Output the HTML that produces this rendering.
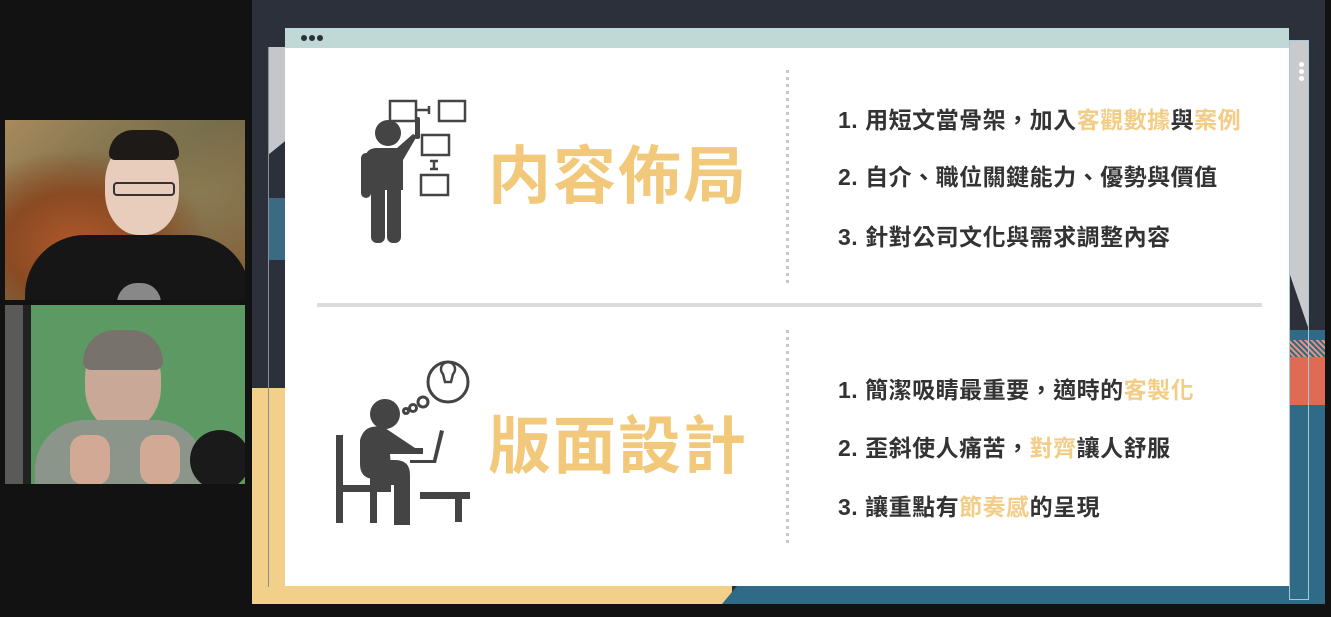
<!DOCTYPE html>
<html><head><meta charset="utf-8"><style>
*{margin:0;padding:0;box-sizing:border-box}
body{width:1331px;height:617px;background:#121212;position:relative;overflow:hidden;font-family:"Liberation Sans","Noto Sans CJK TC",sans-serif}
.a{position:absolute}
.item{position:absolute;left:838px;font-size:23px;font-weight:bold;color:#333;white-space:nowrap;letter-spacing:0.5px}
.y{color:#f3cd86}
.title{position:absolute;left:488px;font-size:63px;font-weight:bold;color:#f2c97a;letter-spacing:2px;white-space:nowrap}
.dots{position:absolute;left:786px;width:3px;background:repeating-linear-gradient(#c8c8c8 0 3px,transparent 3px 7px)}
</style></head><body>
<!-- webcams -->
<div class="a" style="left:5px;top:120px;width:240px;height:180px;background:radial-gradient(ellipse at 30% 70%,#b0582a 0,#8a4a22 30%,transparent 55%),radial-gradient(ellipse at 80% 40%,#8a7a52,transparent 60%),linear-gradient(135deg,#a88a5c,#6f6a4a 50%,#8b5a34);overflow:hidden">
 <div class="a" style="left:100px;top:20px;width:74px;height:95px;border-radius:45%;background:#e8cdbd"></div>
 <div class="a" style="left:104px;top:10px;width:70px;height:30px;border-radius:40px 40px 10px 10px;background:#1d1a18"></div>
 <div class="a" style="left:108px;top:62px;width:62px;height:14px;border:2px solid #333;border-radius:4px"></div>
 <div class="a" style="left:20px;top:115px;width:225px;height:80px;border-radius:60px 60px 0 0;background:#161616"></div>
 <div class="a" style="left:112px;top:163px;width:44px;height:20px;border-radius:20px 20px 0 0;background:#888"></div>
</div>
<div class="a" style="left:5px;top:305px;width:240px;height:179px;background:#5d9a63;overflow:hidden">
 <div class="a" style="left:0;top:0;width:22px;height:179px;background:#5a5a58"></div>
 <div class="a" style="left:18px;top:0;width:8px;height:179px;background:#222"></div>
 <div class="a" style="left:80px;top:30px;width:76px;height:95px;border-radius:45%;background:#c9a898"></div>
 <div class="a" style="left:78px;top:25px;width:80px;height:40px;border-radius:40px 40px 10px 10px;background:#77736c"></div>
 <div class="a" style="left:30px;top:115px;width:170px;height:70px;border-radius:50px 50px 0 0;background:#8b958a"></div>
 <div class="a" style="left:65px;top:130px;width:40px;height:50px;border-radius:14px;background:#d2a994"></div>
 <div class="a" style="left:135px;top:130px;width:40px;height:50px;border-radius:14px;background:#d2a994"></div>
 <div class="a" style="left:185px;top:125px;width:60px;height:60px;border-radius:50%;background:#1a1a1a"></div>
</div>
<!-- slide -->
<div class="a" style="left:252px;top:0;width:1073px;height:604px;background:#2b303b;overflow:hidden">
 <div class="a" style="left:0;top:388px;width:40px;height:216px;background:#f3d08a"></div>
 <div class="a" style="left:0;top:580px;width:480px;height:24px;background:#f3d08a"></div>
 <div class="a" style="left:470px;top:580px;width:610px;height:24px;background:#2f6a86;clip-path:polygon(20px 0,100% 0,100% 100%,0 100%)"></div>
 <div class="a" style="left:1020px;top:330px;width:60px;height:274px;background:#2f6a86"></div>
 <div class="a" style="left:1035px;top:357px;width:40px;height:48px;background:#e06b55"></div>
 <div class="a" style="left:1035px;top:340px;width:40px;height:17px;background:repeating-linear-gradient(45deg,#e8907c 0 2px,#2f6a86 2px 4px)"></div>
 <div class="a" style="left:16px;top:47px;width:20px;height:108px;background:#c4c6cc;clip-path:polygon(0 0,100% 0,100% 85%,0 100%)"></div>
 <div class="a" style="left:16px;top:198px;width:20px;height:62px;background:#3a6b82"></div>
 <div class="a" style="left:16px;top:47px;width:1px;height:540px;background:#8a9098"></div>
 <div class="a" style="left:1037px;top:40px;width:20px;height:290px;background:#c8cace;clip-path:polygon(0 0,100% 0,100% 100%,0 80%)"></div>
 <div class="a" style="left:1037px;top:40px;width:20px;height:560px;border:1px solid #a7c8d6;background:transparent"></div>
</div>
<div class="a" style="left:285px;top:28px;width:1004px;height:20px;background:#c0d8d6"></div>
<div class="a" style="left:301px;top:35px;width:6px;height:6px;border-radius:50%;background:#2b303b;box-shadow:8px 0 #2b303b,16px 0 #2b303b"></div>
<div class="a" style="left:1299px;top:62px;width:5px;height:5px;border-radius:50%;background:#fff;box-shadow:0 7px #fff,0 14px #fff"></div>
<div class="a" style="left:285px;top:48px;width:1004px;height:538px;background:#fff"></div>
<div class="dots" style="top:70px;height:216px"></div>
<div class="dots" style="top:330px;height:216px"></div>
<div class="a" style="left:317px;top:303px;width:945px;height:4px;background:#dcdcdc"></div>
<!-- icon 1 -->
<svg class="a" style="left:355px;top:95px" width="120" height="155" viewBox="0 0 120 155">
 <g fill="none" stroke="#444" stroke-width="2.5">
  <rect x="35" y="6" width="26" height="20"/><rect x="84" y="6" width="26" height="20"/>
  <rect x="67" y="40" width="27" height="20"/><rect x="66" y="80" width="27" height="20"/>
 </g>
 <path d="M62 15h12M74 11v8M79 66v8M75 66h8M75 74h8M35 27v14M31 27h8" stroke="#444" stroke-width="2.5"/>
 <g fill="#444">
  <circle cx="33" cy="38" r="13"/>
  <path d="M10 62q2-9 12-9h20l16-14 4 2-14 24v30H10z"/>
  <rect x="60" y="22" width="5" height="22" rx="2"/>
  <rect x="6" y="58" width="10" height="45" rx="5"/>
  <rect x="16" y="90" width="14" height="58" rx="6"/><rect x="32" y="90" width="14" height="58" rx="6"/>
 </g>
</svg>
<div class="title" style="top:126px">内容佈局</div>
<!-- icon 2 -->
<svg class="a" style="left:330px;top:360px" width="145" height="165" viewBox="0 0 145 165">
 <g fill="none" stroke="#444" stroke-width="3">
  <circle cx="118" cy="22" r="20"/><circle cx="93" cy="42" r="5"/><circle cx="83" cy="48" r="3.5"/><circle cx="76" cy="51" r="2.5"/>
 </g>
 <path d="M113 14a7 7 0 1 1 10 0l-2 8h-6z" fill="none" stroke="#444" stroke-width="2.5"/>
 <g fill="#444">
  <circle cx="55" cy="54" r="15"/>
  <path d="M30 80q5-18 25-12l30 20h8v6H60l2 25H45q-15 0-15-15z"/>
  <path d="M40 100h25q15 0 15 15v75H64v-65H40z"/>
  <rect x="6" y="75" width="7" height="88"/><rect x="6" y="125" width="55" height="7"/><rect x="40" y="130" width="7" height="33"/>
  <rect x="90" y="132" width="50" height="7"/><rect x="125" y="132" width="7" height="30"/>
  <path d="M110 70l4 1-8 32h-26v-3h23z"/>
 </g>
</svg>
<div class="title" style="top:396px">版面設計</div>
<!-- items -->
<div class="item" style="top:101px">1. 用短文當骨架，加入<span class="y">客觀數據</span>與<span class="y">案例</span></div>
<div class="item" style="top:158px">2. 自介、職位關鍵能力、優勢與價值</div>
<div class="item" style="top:218px">3. 針對公司文化與需求調整內容</div>
<div class="item" style="top:371px">1. 簡潔吸睛最重要，適時的<span class="y">客製化</span></div>
<div class="item" style="top:429px">2. 歪斜使人痛苦，<span class="y">對齊</span>讓人舒服</div>
<div class="item" style="top:488px">3. 讓重點有<span class="y">節奏感</span>的呈現</div>
</body></html>
